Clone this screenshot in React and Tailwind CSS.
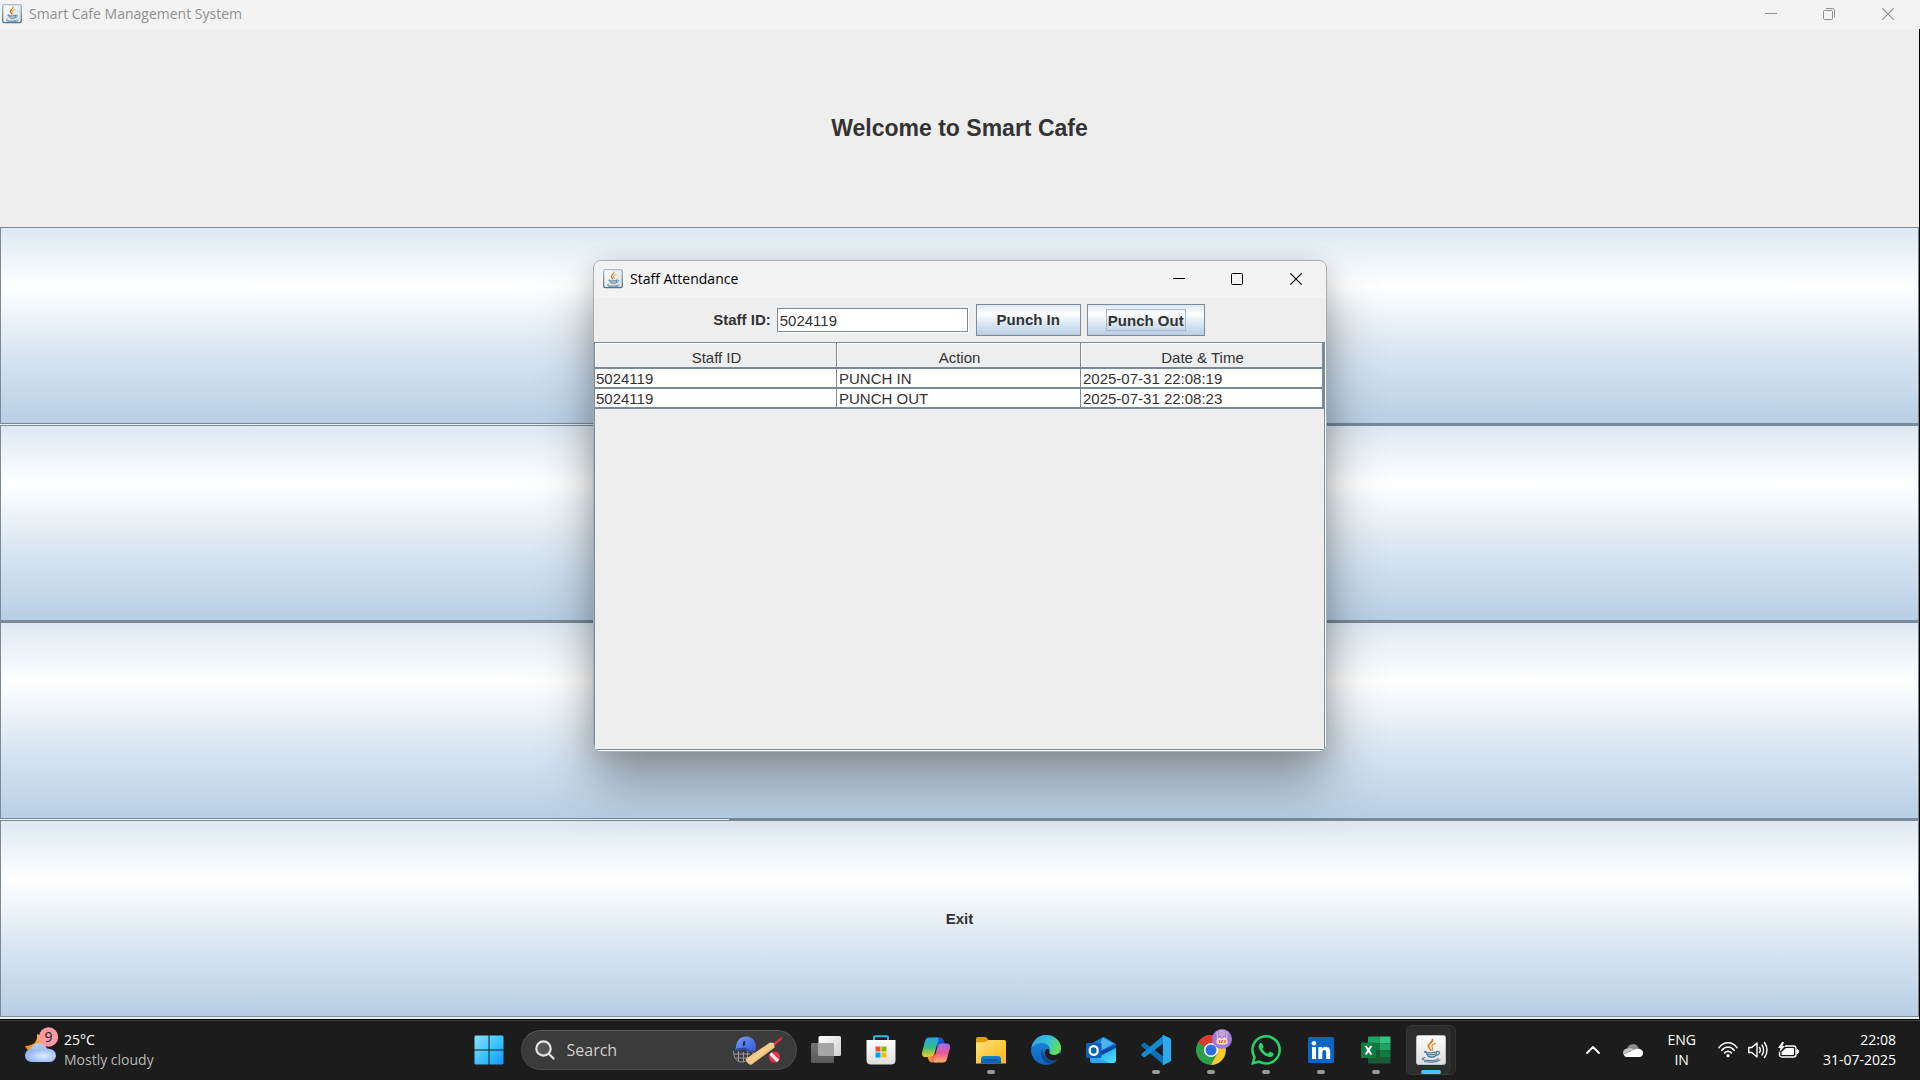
import React from 'react';

const UI = "font-['Open_Sans','Noto_Sans',sans-serif]";
const SWING = "font-['Liberation_Sans',Arial,sans-serif]";
const METAL = 'border border-[#7a8a99] bg-[linear-gradient(180deg,#dde8f3_0%,#ffffff_30%,#dde8f3_60%,#b8cfe5_100%)]';

function JavaCup() {
  return (
    <g fill="none" strokeLinecap="round">
      <path d="M16.4 4.5c1 2.6-4.6 4.2-4 7 .2 1.4 1.8 2 2.2 3.6" stroke="#e76f00" strokeWidth="1.6" />
      <path d="M19.6 8.4c-2.6.7-4 1.8-3.6 3.2.3 1 1.4 1.6.2 3.4" stroke="#f08a24" strokeWidth="1.3" />
      <path d="M10 16.3c-2 .4-2.4 1.1.6 1.4 3.600.3 7.400 0 9.900-.8" stroke="#5382a1" strokeWidth="1.300" />
      <path d="M10.500 17.500c.300 2 1 3.300 2 4 2 .7 4.800.5 6.600-.3.800-1.200 1.300-2.300 1.500-4" stroke="#5382a1" strokeWidth="1.500" />
      <path d="M20.600 16.700c3.800-1.200 4.200 2.800-.8 3.600" stroke="#5382a1" strokeWidth="1.200" />
      <path d="M12 19.300c2 .5 4.600.5 6.600 0" stroke="#5382a1" strokeWidth="1.200" />
      <path d="M8.600 22.500c-5 1.300-1.400 3 4.500 3.100 5.500.1 9.600-.8 8.800-2.100M8.500 26.500c5 1 12 .8 15.500-1.400" stroke="#5382a1" strokeWidth="1.200" />
    </g>
  );
}

function JavaFrameIcon() {
  return (
    <svg viewBox="0 0 30 30" className="size-5 shrink-0" aria-hidden="true">
      <defs>
        <linearGradient id="jf" x1="0" y1="0" x2="0" y2="1">
          <stop offset="0" stopColor="#a9bccb" />
          <stop offset="1" stopColor="#4f7690" />
        </linearGradient>
        <linearGradient id="jb" x1="0" y1="0" x2="1" y2="1">
          <stop offset="0" stopColor="#ffffff" />
          <stop offset="1" stopColor="#d5dade" />
        </linearGradient>
      </defs>
      <rect x="1" y="1" width="28" height="27" rx="2.500" fill="url(#jb)" stroke="url(#jf)" strokeWidth="2" />
      <JavaCup />
    </svg>
  );
}

function JavaTaskIcon() {
  return (
    <svg viewBox="0 0 30 30" className="size-[30px]" aria-hidden="true">
      <defs>
        <linearGradient id="jt" x1="0" y1="0" x2="0" y2="1">
          <stop offset="0" stopColor="#ffffff" />
          <stop offset="1" stopColor="#dcdcde" />
        </linearGradient>
      </defs>
      <rect x=".5" y=".5" width="29" height="29" rx="2" fill="url(#jt)" stroke="#b9c2c9" />
      <JavaCup />
    </svg>
  );
}

function Minimize() {
  return (
    <svg viewBox="0 0 12 12" className="size-3" aria-hidden="true">
      <path d="M0 5.500h12" stroke="currentColor" fill="none" />
    </svg>
  );
}

function Maximize() {
  return (
    <svg viewBox="0 0 12 12" className="size-3" aria-hidden="true">
      <rect x=".5" y=".5" width="11" height="11" rx="1" stroke="currentColor" fill="none" />
    </svg>
  );
}

function Restore() {
  return (
    <svg viewBox="0 0 12 12" className="size-3" aria-hidden="true">
      <rect x=".5" y="2.500" width="9" height="9" rx="1" stroke="currentColor" fill="none" />
      <path d="M3 .5h6.500a2 2 0 0 1 2 2V9.500" stroke="currentColor" fill="none" />
    </svg>
  );
}

function Close() {
  return (
    <svg viewBox="0 0 12 12" className="size-3" aria-hidden="true">
      <path d="M.3.3l11.400 11.400M11.700.3L.3 11.700" stroke="currentColor" strokeWidth="1.100" fill="none" />
    </svg>
  );
}

function WindowControls({ restored }) {
  const cell = 'flex w-[58px] items-center justify-center';
  return (
    <div className={`flex self-stretch pb-px ${restored ? 'pr-[2px]' : ''}`}>
      <button type="button" aria-label="Minimize" className={cell}><Minimize /></button>
      <button type="button" aria-label={restored ? 'Restore' : 'Maximize'} className={cell}>
        {restored ? <Restore /> : <Maximize />}
      </button>
      <button type="button" aria-label="Close" className="flex w-[60px] items-center justify-center"><Close /></button>
    </div>
  );
}

function MenuButton({ children, label }) {
  return (
    <button type="button" aria-label={label} className={`min-h-0 flex-1 basis-0 text-[15px] font-bold text-[#333333] ${METAL}`}>
      {children}
    </button>
  );
}

function Seam({ light }) {
  return (
    <div className="h-px shrink-0 bg-[#7a8a99]">
      <div className={`h-px bg-[#eeeeee] ${light}`} />
    </div>
  );
}

const ROWS = [
  ['5024119', 'PUNCH IN', '2025-07-31 22:08:19'],
  ['5024119', 'PUNCH OUT', '2025-07-31 22:08:23'],
];

function AttendanceTable() {
  return (
    <div className="flex-1 border border-[#7a8a99] bg-[#eeeeee]">
      <table className="w-full table-fixed border-separate border-spacing-0 border-r-2 border-[#7a8a99] text-[15px] text-[#333333]">
        <colgroup>
          <col className="w-[242px]" />
          <col className="w-[244px]" />
          <col />
        </colgroup>
        <thead>
          <tr>
            {['Staff ID', 'Action', 'Date & Time'].map((h) => (
              <th key={h} scope="col" className="h-[26px] border-r border-b-2 border-[#7a8a99] p-0 font-normal leading-[18px] shadow-[inset_1px_1px_0_#ffffff] last:border-r-0">
                <span className="block pt-[6px] pl-[2px]">{h}</span>
              </th>
            ))}
          </tr>
        </thead>
        <tbody>
          {ROWS.map((r) => (
            <tr key={r[2]}>
              {r.map((c, i) => (
                <td key={i} className="h-5 border-r border-b-2 border-[#7a8a99] bg-white p-0 pt-[2px] pl-[2px] leading-4 first:pl-px last:border-r-0">
                  {c}
                </td>
              ))}
            </tr>
          ))}
        </tbody>
      </table>
    </div>
  );
}

function AttendanceDialog() {
  return (
    <section
      role="dialog"
      aria-labelledby="dlg-title"
      className={`absolute top-[260px] left-1/2 flex h-[492px] w-[734px] -translate-x-1/2 flex-col overflow-hidden rounded-lg border border-[#a8adb2] bg-[#eeeeee] shadow-[0_32px_54px_rgba(0,0,0,0.34),0_4px_24px_rgba(0,0,0,0.12)] ${SWING}`}
    >
      <header className={`flex h-[37px] shrink-0 items-center bg-[#f3f3f3] pb-px pl-[9px] text-black ${UI}`}>
        <JavaFrameIcon />
        <h2 id="dlg-title" className="ml-[7px] flex-1 text-sm">Staff Attendance</h2>
        <WindowControls />
      </header>
      <form className="flex h-11 shrink-0 items-center justify-center gap-[6px] text-[15px] text-[#333333]" onSubmit={(e) => e.preventDefault()}>
        <label htmlFor="staff" className="pt-px font-bold">Staff ID:</label>
        <input
          id="staff"
          defaultValue="5024119"
          className="mr-[2px] h-6 w-[191px] border border-[#7a8a99] bg-white px-[2px] shadow-[1px_1px_0_#ffffff] outline-none"
        />
        <button type="button" className={`h-8 w-[105px] pt-px font-bold ${METAL}`}>Punch In</button>
        <button type="button" className={`mr-[2px] flex h-8 w-[118px] items-center justify-center font-bold ${METAL}`}>
          <span className="border border-[#a3b8cc] px-px pt-px leading-[19px]">Punch Out</span>
        </button>
      </form>
      <div className="flex min-h-0 flex-1 pr-px pb-px bg-white">
        <AttendanceTable />
      </div>
    </section>
  );
}

function WeatherIcon() {
  return (
    <svg viewBox="0 0 36 38" className="h-[38px] w-9" aria-hidden="true">
      <defs>
        <linearGradient id="moon" x1="0" y1="0" x2="0" y2="1">
          <stop offset="0" stopColor="#fcc93a" /><stop offset="1" stopColor="#f07c12" />
        </linearGradient>
        <linearGradient id="wc" x1="0" y1="0" x2="0" y2="1">
          <stop offset="0" stopColor="#b6cffa" /><stop offset="1" stopColor="#7fa8f0" />
        </linearGradient>
        <radialGradient id="wc2" cx=".6" cy=".55" r=".6">
          <stop offset="0" stopColor="#dfeafd" /><stop offset="1" stopColor="#8db3f5" />
        </radialGradient>
      </defs>
      <path d="M13 7c1 7-3 12-12 12 2 4 5 7 9 8l10-8-3-10z" fill="url(#moon)" />
      <circle cx="15" cy="25" r="9" fill="url(#wc)" />
      <path d="M8 22a7.500 7.500 0 0 1 7 3c3-4 9-4 11-3a6.500 6.500 0 0 1-1 13H7a6.500 6.500 0 0 1 1-13z" fill="url(#wc2)" />
      <circle cx="24.500" cy="10" r="9.700" fill="#ff99a4" />
      <text x="24.500" y="15" textAnchor="middle" fontSize="14" fill="#1b1b1b" fontFamily="Open Sans, sans-serif">9</text>
    </svg>
  );
}

function WindowsLogo() {
  return (
    <svg viewBox="0 0 30 30" className="size-[30px]" aria-hidden="true">
      <defs>
        <linearGradient id="win" gradientUnits="userSpaceOnUse" x1="0" y1="0" x2="30" y2="30">
          <stop offset="0" stopColor="#8fe0ff" /><stop offset=".5" stopColor="#3fc5fb" /><stop offset="1" stopColor="#0a95ff" />
        </linearGradient>
      </defs>
      <path d="M1.500.5H14.500V14.500H.5V1.500zM15.500.5H28.500l1 1V14.500h-14zM.5 15.500h14v14H1.500l-1-1zM15.500 15.500h14v13l-1 1h-13z" fill="url(#win)" />
    </svg>
  );
}

function SearchGlass() {
  return (
    <svg viewBox="0 0 20 20" className="size-5" fill="none" stroke="#e4e4e4" strokeWidth="2.200" aria-hidden="true">
      <circle cx="8.500" cy="8.500" r="7.200" fill="#555" />
      <path d="M13.700 13.700l4.800 4.800" strokeLinecap="round" />
    </svg>
  );
}

function CricketArt() {
  return (
    <svg viewBox="0 0 50 32" className="h-8 w-[50px]" aria-hidden="true">
      <defs>
        <linearGradient id="helm" x1="0" y1="0" x2="1" y2="1">
          <stop offset="0" stopColor="#7fa0f6" /><stop offset="1" stopColor="#2f55d6" />
        </linearGradient>
        <linearGradient id="bat" x1="0" y1="0" x2="1" y2="1">
          <stop offset="0" stopColor="#e59a4e" /><stop offset=".5" stopColor="#f8cf90" /><stop offset="1" stopColor="#c97a34" />
        </linearGradient>
      </defs>
      <g fill="none" stroke="#9a9aa2" strokeWidth="1">
        <path d="M1.500 17c0 6 2.500 11 8 11s10-3 12-10M2 20h16M3.500 24h14M6.500 17v10M11.500 18v10M16 17l-1 9" />
      </g>
      <path d="M4 14C4 5 10 2 15 2.500c6 .5 9 5.500 9 11.500l-1 3-6 1-4-3-11 1z" fill="url(#helm)" />
      <path d="M1 15.500l12-1.500 5 3.500" stroke="#1f45b8" fill="none" strokeWidth="1.200" />
      <ellipse cx="12" cy="9.500" rx="1.200" ry="2.800" fill="#1a2a5e" transform="rotate(12 12 9.500)" />
      <path d="M42 10.500L49 4.500" stroke="#d62f42" strokeWidth="2.600" strokeLinecap="round" />
      <path d="M13.500 25L38 8.500l4 .5.7 4.500L19 31q-4-1-5.500-6z" fill="url(#bat)" />
      <circle cx="42.500" cy="23" r="5.500" fill="#e5344c" />
      <path d="M38.500 19.500l7.500 7.500" stroke="#f6e5e7" strokeWidth="3.200" />
    </svg>
  );
}

function TaskView() {
  return (
    <svg viewBox="0 0 30 30" className="size-[30px]" aria-hidden="true">
      <defs>
        <linearGradient id="tv" x1="0" y1="0" x2="1" y2="1">
          <stop offset="0" stopColor="#ffffff" /><stop offset="1" stopColor="#d0d0d0" />
        </linearGradient>
        <linearGradient id="tvb" x1="0" y1="0" x2="0" y2="1">
          <stop offset="0" stopColor="#747474" /><stop offset="1" stopColor="#585858" />
        </linearGradient>
      </defs>
      <rect x="0" y="8" width="23" height="20" rx="1.500" fill="url(#tvb)" />
      <rect x="7.500" y="1" width="22.500" height="20" rx="1.500" fill="url(#tv)" />
      <path d="M7.500 8H23v13H8.500a1 1 0 0 1-1-1z" fill="#a5a5a5" />
    </svg>
  );
}

function Store() {
  return (
    <svg viewBox="0 0 30 30" className="size-[30px]" aria-hidden="true">
      <defs>
        <linearGradient id="st" x1="0" y1="0" x2="0" y2="1">
          <stop offset="0" stopColor="#ffffff" /><stop offset="1" stopColor="#dedede" />
        </linearGradient>
      </defs>
      <path d="M8 6V2.200Q8 1.200 9 1.200H21Q22 1.200 22 2.200V6" fill="none" stroke="#2fb9e8" strokeWidth="2" />
      <path d="M.5 5.500Q.5 5 1 5H29Q29.500 5 29.500 5.500V25Q29.500 29.500 25 29.500H5Q.5 29.500.5 25z" fill="url(#st)" />
      <path d="M9.500 11.500h5v5h-5z" fill="#f25022" />
      <path d="M15.500 11.500h5v5h-5z" fill="#7fba00" />
      <path d="M9.500 17.500h5v5h-5z" fill="#00a4ef" />
      <path d="M15.500 17.500h5v5h-5z" fill="#ffb900" />
    </svg>
  );
}

function Copilot() {
  return (
    <svg viewBox="0 0 30 30" className="size-[30px]" aria-hidden="true">
      <defs>
        <linearGradient id="cp1" x1="0" y1="0" x2="0" y2="1">
          <stop offset="0" stopColor="#1fa9f3" /><stop offset=".5" stopColor="#37b98a" /><stop offset="1" stopColor="#f7cf18" />
        </linearGradient>
        <linearGradient id="cp2" x1="0" y1="0" x2="0" y2="1">
          <stop offset="0" stopColor="#a56bf0" /><stop offset=".5" stopColor="#ea5694" /><stop offset="1" stopColor="#fdb164" />
        </linearGradient>
        <linearGradient id="cp3" x1="0" y1="0" x2="1" y2="0">
          <stop offset="0" stopColor="#1c6fdc" /><stop offset="1" stopColor="#1b3fc4" />
        </linearGradient>
        <linearGradient id="cp4" x1="0" y1="0" x2="1" y2="0">
          <stop offset="0" stopColor="#f3a033" /><stop offset="1" stopColor="#ee5060" />
        </linearGradient>
      </defs>
      <path d="M14 2.500h5.500q2.500 0 3.200 2.500l1.300 4h-4q-2.500 0-3.500 3z" fill="url(#cp3)" />
      <path d="M8 2.500h7.500q2.500 0 1.800 2.500l-4 14Q12.300 22 9.500 22H4.500Q0 22 1.200 17L4 6Q5 2.500 8 2.500z" fill="url(#cp1)" />
      <path d="M16 27.500h-5q-2.500 0-3.300-2.500L6.500 21.500h3.500q2.500 0 3.500-3z" fill="url(#cp4)" />
      <path d="M22 27.500h-7.500q-2.500 0-1.800-2.500l4-14Q17.700 8.500 20.500 8.500h5q4.500 0 3.300 5L26 24Q25 27.500 22 27.500z" fill="url(#cp2)" />
    </svg>
  );
}

function Folder() {
  return (
    <svg viewBox="0 0 30 30" className="size-[30px]" aria-hidden="true">
      <defs>
        <linearGradient id="fo" x1="0" y1="0" x2="1" y2="1">
          <stop offset="0" stopColor="#ffe07a" /><stop offset="1" stopColor="#fdb913" />
        </linearGradient>
        <linearGradient id="fb" x1="0" y1="0" x2="0" y2="1">
          <stop offset="0" stopColor="#1683d8" /><stop offset="1" stopColor="#0b5fae" />
        </linearGradient>
      </defs>
      <path d="M0 3.500Q0 2 1.500 2H9q1 0 1.700.8L13 5.500v6H0z" fill="#dd9c09" />
      <path d="M0 8Q0 7.300 1 7.300h7.500q1 0 1.800-.8l1-.8Q12 5 13 5h15.500Q30 5 30 6.500v22H0z" fill="url(#fo)" />
      <path d="M5 28.500V24q0-3 3-3h14q3 0 3 3v4.500z" fill="url(#fb)" />
      <path d="M9 25h12" stroke="#0a4886" strokeLinecap="round" />
    </svg>
  );
}

function Edge() {
  return (
    <svg viewBox="0 0 30 30" className="size-[30px]" aria-hidden="true">
      <defs>
        <linearGradient id="ed1" x1="0" y1=".2" x2="1" y2=".6">
          <stop offset="0" stopColor="#2ca0e2" /><stop offset=".5" stopColor="#35c1d8" /><stop offset="1" stopColor="#66e04f" />
        </linearGradient>
        <linearGradient id="ed2" x1="0" y1="0" x2="0" y2="1">
          <stop offset="0" stopColor="#1a8be0" /><stop offset="1" stopColor="#0c63be" />
        </linearGradient>
      </defs>
      <circle cx="15" cy="15" r="15" fill="url(#ed2)" />
      <path d="M.5 13C2 5 8 0 15 0c9 0 15 6.500 15 13 0 4.500-3.500 7-7.500 7-3.500 0-4.500-1.300-4.500-2 0-.8 1-1.300 1-3.300C19 11 15.500 8 11 8 6 8 2 10.500.5 13z" fill="url(#ed1)" />
      <path d="M12 13c-3.500 4-2.500 12 5 15.500 3.500.5 8-1.500 10.500-5.500-4 1.800-9 1.800-12.500-1.500-3-2.500-4-5.500-3-8.500z" fill="#13498f" />
      <path d="M18.200 17.300c.3 2.200 3.500 3 6 2.700 2-.3 3.600-1.200 4.600-2.500L30 20l-2 4c-5 2.300-11 1.300-13.500-3.500-1.200-2.500-.5-5 .8-6.200 2-.8 3.700 1 2.900 3z" fill="#1c1c1c" />
    </svg>
  );
}

function Outlook() {
  return (
    <svg viewBox="0 0 30 30" className="size-[30px]" aria-hidden="true">
      <defs>
        <linearGradient id="ol" x1="0" y1="0" x2="1" y2="1">
          <stop offset="0" stopColor="#1b8fe8" /><stop offset="1" stopColor="#4fe4ff" />
        </linearGradient>
      </defs>
      <path d="M4 9.500L16 2.500q1.500-.8 3 0L30 9v12L15 25 4 18z" fill="#1a7ed0" />
      <path d="M16.500 2.500l11 6L14 16V9z" fill="#4ab5ef" />
      <path d="M30 9.500v4L15 22V16z" fill="#0a4aa6" />
      <path d="M30 13v12q0 3-3 3H8q-3 0-4-2z" fill="url(#ol)" />
      <path d="M4 20l20 8H7q-3 0-3-3z" fill="#2fa4ee" />
      <rect x="0" y="8" width="15.500" height="15" rx="1.200" fill="#0f5fbf" />
      <ellipse cx="7.700" cy="15.500" rx="4" ry="4.400" fill="none" stroke="#fff" strokeWidth="2.300" />
    </svg>
  );
}

function VSCode() {
  return (
    <svg viewBox="0 0 30 30" className="size-[30px]" aria-hidden="true">
      <path d="M.7 11.200q-1-.9 0-1.800l1.700-1.500q.8-.7 1.700 0L23 22v7.500q-.8 0-1.500-.7z" fill="#0b72b9" />
      <path d="M.7 18.800q-1 .9 0 1.800l1.700 1.500q.8.7 1.700 0L23 8V.5q-.8 0-1.500.7z" fill="#128ad4" />
      <path d="M21 29.500q1 .7 2 .2l6-2.900q1-.5 1-1.600V4.800q0-1.100-1-1.600L23 .3q-1-.5-2 .3 1-.4 1 1v26.800q0 1.500-1 1.100z" fill="#2aabf2" />
    </svg>
  );
}

function Chrome() {
  return (
    <svg viewBox="0 0 36 36" className="absolute -top-[6px] left-[12px] size-9" aria-hidden="true">
      <circle cx="15" cy="21" r="15" fill="#2f9e4b" />
      <path d="M15 21L2 13.500A15 15 0 0 1 28 13.500L28 14H15z" fill="#de3a2e" />
      <path d="M15 14h13a15 15 0 0 1-13 22l6.300-11.500z" fill="#fcc927" />
      <circle cx="15" cy="21" r="7" fill="#ffffff" />
      <circle cx="15" cy="21" r="5.500" fill="#2b6ee6" />
      <circle cx="26" cy="10" r="10" fill="#9d7be0" />
      <path d="M21 2.500l.5 9M24 1v6M28 1v6M31 2.500l-.5 9M26 1v8" stroke="#e6d5c0" strokeWidth="1" />
      <path d="M20.500 11l3-3 2.500 2 2.500-2 3 3v3.500q-5 2.500-11 0z" fill="#f4dfb8" />
      <path d="M23.500 11v3M26.500 11l-1 3M29 11v3" stroke="#e0593c" strokeWidth="1.300" />
    </svg>
  );
}

function WhatsApp() {
  return (
    <svg viewBox="0 0 24 24" className="size-[30px]" fill="#25d366" aria-hidden="true">
      <path d="M17.472 14.382c-.297-.149-1.758-.867-2.030-.967-.273-.099-.471-.148-.670.150-.197.297-.767.966-.940 1.164-.173.199-.347.223-.644.075-.297-.150-1.255-.463-2.390-1.475-.883-.788-1.480-1.761-1.653-2.059-.173-.297-.018-.458.130-.606.134-.133.298-.347.446-.520.149-.174.198-.298.298-.497.099-.198.050-.371-.025-.520-.075-.149-.669-1.612-.916-2.207-.242-.579-.487-.500-.669-.510-.173-.008-.371-.010-.570-.010-.198 0-.520.074-.792.372-.272.297-1.040 1.016-1.040 2.479 0 1.462 1.065 2.875 1.213 3.074.149.198 2.096 3.200 5.077 4.487.709.306 1.262.489 1.694.625.712.227 1.360.195 1.871.118.571-.085 1.758-.719 2.006-1.413.248-.694.248-1.289.173-1.413-.074-.124-.272-.198-.570-.347m-5.421 7.403h-.004a9.870 9.870 0 0 1-5.031-1.378l-.361-.214-3.741.982.998-3.648-.235-.374a9.860 9.860 0 0 1-1.510-5.260c.001-5.450 4.436-9.884 9.888-9.884 2.640 0 5.122 1.030 6.988 2.898a9.825 9.825 0 0 1 2.893 6.994c-.003 5.450-4.437 9.884-9.885 9.884m8.413-18.297A11.815 11.815 0 0 0 12.050 0C5.495 0 .160 5.335.157 11.892c0 2.096.547 4.142 1.588 5.945L.057 24l6.305-1.654a11.882 11.882 0 0 0 5.683 1.448h.005c6.554 0 11.890-5.335 11.893-11.893a11.821 11.821 0 0 0-3.480-8.413z" />
    </svg>
  );
}

function LinkedIn() {
  return (
    <svg viewBox="0 0 26 26" className="size-[26px]" aria-hidden="true">
      <rect width="26" height="26" rx="1.500" fill="#0a66c2" />
      <circle cx="6" cy="6.200" r="2.300" fill="#fff" />
      <path d="M4 10h4v12H4zM10.300 10h3.800v1.700c.7-1.200 2-2 3.800-2 3.300 0 4.300 2.200 4.300 5.300v7h-4v-6.300c0-1.500-.4-2.700-1.900-2.700s-2 1.200-2 2.700V22h-4z" fill="#fff" />
    </svg>
  );
}

function Excel() {
  return (
    <svg viewBox="0 0 30 30" className="size-[30px]" aria-hidden="true">
      <path d="M7 2.500Q7 1.500 8 1.500H18.500V8.500H7z" fill="#21a366" />
      <path d="M18.500 1.500H28.500q1 0 1 1V8.500h-11z" fill="#33c481" />
      <path d="M7 8.500h11.500v7H7z" fill="#107c41" />
      <path d="M18.500 8.500h11v7h-11z" fill="#21a366" />
      <path d="M7 15.500h11.500v6.500H7z" fill="#185c37" />
      <path d="M18.500 15.500h11v6.500h-11z" fill="#107c41" />
      <path d="M7 22h22.500v5.500q0 1-1 1H8q-1 0-1-1z" fill="#185c37" />
      <rect x="0" y="7.500" width="15" height="15.500" rx="1.200" fill="#107c41" />
      <path d="M4.700 11l5.600 8.500M10.300 11l-5.600 8.500" stroke="#fff" strokeWidth="2.200" />
    </svg>
  );
}

const APPS = [
  { name: 'Task View', icon: <TaskView /> },
  { name: 'Microsoft Store', icon: <Store /> },
  { name: 'Copilot', icon: <Copilot /> },
  { name: 'File Explorer', icon: <Folder />, open: true },
  { name: 'Edge', icon: <Edge /> },
  { name: 'Outlook', icon: <Outlook /> },
  { name: 'Visual Studio Code', icon: <VSCode />, open: true },
  { name: 'Chrome', icon: <Chrome />, open: true },
  { name: 'WhatsApp', icon: <WhatsApp />, open: true },
  { name: 'LinkedIn', icon: <LinkedIn />, open: true },
  { name: 'Excel', icon: <Excel />, open: true },
];

function TaskApp({ name, icon, open }) {
  return (
    <button type="button" aria-label={name} className="relative flex w-[55px] items-center justify-center">
      <span className={name === 'Chrome' ? 'relative -ml-6 size-[30px]' : 'flex'}>{icon}</span>
      {open && <span className="absolute bottom-[6px] left-1/2 h-1 w-2 -translate-x-1/2 rounded-full bg-[#9a9a9a]" />}
    </button>
  );
}

function ChevronUp() {
  return (
    <svg viewBox="0 0 14 8" className="h-2 w-[14px]" fill="none" stroke="#fff" strokeWidth="1.800" aria-hidden="true">
      <path d="M1 7l6-6 6 6" strokeLinecap="round" strokeLinejoin="round" />
    </svg>
  );
}

function CloudIcon() {
  return (
    <svg viewBox="0 0 20 13" className="h-[13px] w-5" aria-hidden="true">
      <path d="M4 5a6 6 0 0 1 11.500-1L9 8z" fill="#8d8d8d" />
      <path d="M4.500 4.500C2 4.500 0 6.300 0 8.500q0 1 .5 2L11 5.500Q8 3.500 4.500 4.500z" fill="#c4c4c4" />
      <path d="M.5 10.500L13 5q2-1 4 0 3 1 3 4 0 4-4 4H4q-2.500 0-3.500-2.500z" fill="#ffffff" />
    </svg>
  );
}

function WifiIcon() {
  return (
    <svg viewBox="0 0 20 16" className="h-4 w-5" fill="none" stroke="#fff" strokeWidth="1.500" strokeLinecap="round" aria-hidden="true">
      <path d="M.9 5.800c5-6.600 13.200-6.600 18.200 0M3.700 8.500c3.600-4.600 9-4.600 12.600 0M6.500 11c2-2.500 5-2.500 7 0" />
      <circle cx="10" cy="13.700" r="1.600" fill="#fff" stroke="none" />
    </svg>
  );
}

function SpeakerIcon() {
  return (
    <svg viewBox="0 0 20 18" className="h-[18px] w-5" fill="none" stroke="#fff" strokeWidth="1.400" strokeLinecap="round" strokeLinejoin="round" aria-hidden="true">
      <path d="M.8 6.500h3L9 2v14l-5.200-4.500h-3z" />
      <path d="M11.500 6.500q1.600 2.500 0 5M14 4q3.200 5 0 10M16.500 1.500q5 7.500 0 15" />
    </svg>
  );
}

function BatteryIcon() {
  return (
    <svg viewBox="0 0 21 17" className="h-[17px] w-[21px]" aria-hidden="true">
      <path d="M7 4h8.500Q18 4 18 6.500v6q0 2.500-2.500 2.500H4Q1.500 15 1.500 12.500V10" fill="none" stroke="#fff" strokeWidth="1.400" />
      <path d="M8 6h7q1 0 1 1v5q0 1-1 1H4.500q-1 0-1-1v-2z" fill="#fff" />
      <path d="M19 7.500q1.500 0 1.500 2t-1.500 2z" fill="#fff" stroke="#fff" />
      <path d="M4 0L0 6h2.500L1.500 10 7 4H4.500L6 0z" fill="#fff" />
    </svg>
  );
}

function Taskbar() {
  return (
    <footer className={`grid h-[61px] shrink-0 grid-cols-[1fr_auto_1fr] border-t border-black bg-[#1c1c1c] text-sm text-white shadow-[inset_0_1px_0_#3f3f42] ${UI}`}>
      <button type="button" className="flex items-center justify-self-start pl-6 text-left">
        <span className="self-start pt-[7px]"><WeatherIcon /></span>
        <span className="ml-1 leading-5">
          <span className="block">25°C</span>
          <span className="block text-[#b8b8b8]">Mostly cloudy</span>
        </span>
      </button>
      <nav aria-label="Taskbar" className="flex">
        <button type="button" aria-label="Start" className="mr-1 flex w-[55px] items-center justify-center"><WindowsLogo /></button>
        <label className="mr-[2px] flex h-10 w-[276px] items-center self-center rounded-full border border-[#4a4a4a] border-t-[#5c5c5c] bg-[#3b3b3b] pr-[14px] pl-[13px]">
          <SearchGlass />
          <input type="search" aria-label="Search" placeholder="Search" className="ml-3 min-w-0 flex-1 bg-transparent text-base outline-none placeholder:text-[#cfcfcf]" />
          <CricketArt />
        </label>
        {APPS.map((a) => <TaskApp key={a.name} {...a} />)}
        <button type="button" aria-label="Java" className="relative flex w-[55px] items-center justify-center">
          <span className="absolute top-[5px] left-[2px] h-[50px] w-[50px] rounded-md border border-[#343434] bg-[#262626]" />
          <span className="absolute top-[5px] left-[2px] flex h-[50px] w-11 items-center justify-end rounded-md border border-[#3a3a3a] bg-[#2d2d2d] pr-[3px]"><JavaTaskIcon /></span>
          <span className="absolute bottom-[6px] left-[17px] h-1 w-5 rounded-full bg-[#4cc2ff]" />
        </button>
      </nav>
      <div className="flex items-center justify-self-end pr-6">
        <button type="button" aria-label="Show hidden icons" className="mr-[23px]"><ChevronUp /></button>
        <button type="button" aria-label="OneDrive" className="mr-6"><CloudIcon /></button>
        <button type="button" className="mr-[22px] leading-5">ENG<br />IN</button>
        <button type="button" aria-label="Network, sound and battery" className="mr-6 flex items-center gap-[10px]">
          <WifiIcon /><SpeakerIcon /><BatteryIcon />
        </button>
        <button type="button" className="text-right leading-5">22:08<br />31-07-2025</button>
      </div>
    </footer>
  );
}

export default function App() {
  return (
    <div className="relative flex h-screen min-h-[800px] flex-col overflow-hidden bg-[#eeeeee]">
      <header className={`flex h-[29px] shrink-0 items-center bg-[#f3f3f3] pb-px pl-[2px] text-[#8f8f8f] ${UI}`}>
        <JavaFrameIcon />
        <h1 className="ml-[7px] flex-1 text-sm">Smart Cafe Management System</h1>
        <WindowControls restored />
      </header>
      <main className={`flex min-h-0 flex-1 flex-col border-r border-black bg-[#eeeeee] pb-[2px] ${SWING}`}>
        <div className="flex min-h-0 flex-1 basis-0 items-center justify-center pt-[2px]">
          <p className="text-[23px] font-bold text-[#333333]">Welcome to Smart Cafe</p>
        </div>
        <div className="h-px shrink-0" />
        <MenuButton label="Menu item 1" />
        <Seam light="w-[31%]" />
        <MenuButton label="Menu item 2" />
        <Seam light="w-0" />
        <MenuButton label="Menu item 3" />
        <Seam light="w-[38%]" />
        <MenuButton><span className="block pt-[2px]">Exit</span></MenuButton>
      </main>
      <Taskbar />
      <AttendanceDialog />
    </div>
  );
}
